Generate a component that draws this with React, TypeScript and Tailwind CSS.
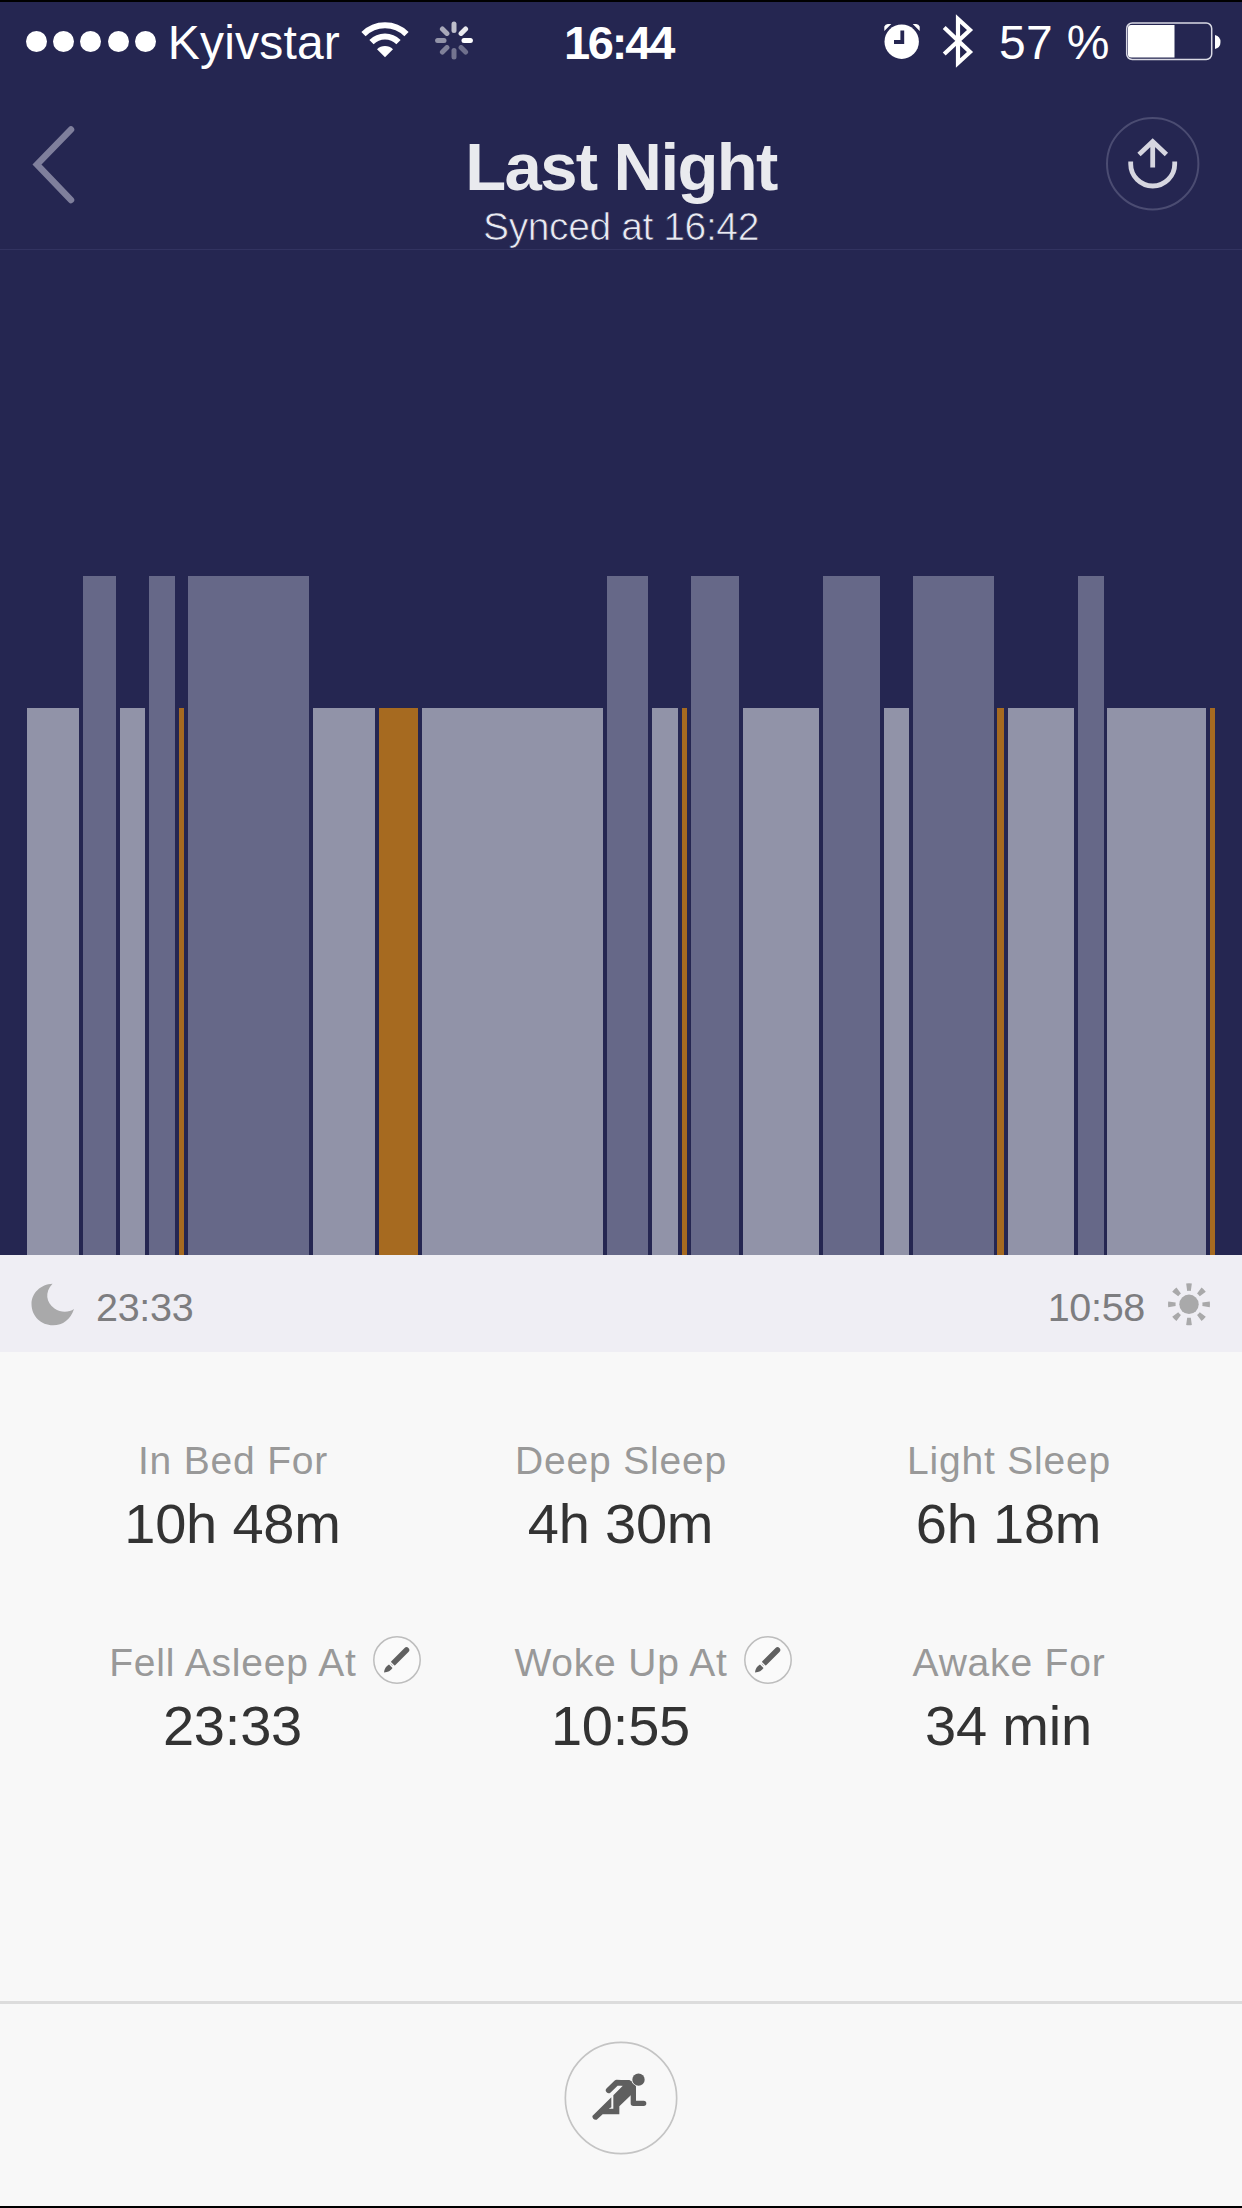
import type { ReactNode } from "react";

type Phase = "light" | "deep" | "awake";

const phaseStyle: Record<Phase, string> = {
  light: "h-[547px] bg-[#9193a8]",
  deep: "h-[679px] bg-[#666888]",
  awake: "h-[547px] bg-[#a66a20]",
};

const segments: [number, number, Phase][] = [
  [27, 79, "light"],
  [83, 116, "deep"],
  [120, 145, "light"],
  [149, 175, "deep"],
  [179, 184, "awake"],
  [188, 309, "deep"],
  [313, 375, "light"],
  [379, 418, "awake"],
  [422, 603, "light"],
  [607, 648, "deep"],
  [652, 678, "light"],
  [682, 687, "awake"],
  [691, 739, "deep"],
  [743, 819, "light"],
  [823, 880, "deep"],
  [884, 909, "light"],
  [913, 994, "deep"],
  [997, 1004, "awake"],
  [1008, 1074, "light"],
  [1078, 1104, "deep"],
  [1107, 1206, "light"],
  [1210, 1215, "awake"],
];

function StatusBar() {
  const rays = [1, 0.9, 0.7, 0.6, 0.5, 0.42, 0.36, 0.34];
  return (
    <div className="flex h-20 shrink-0 items-center text-[48px] leading-[80px] text-white">
      <div className="flex w-[480px] shrink-0 items-center">
        <div className="-mt-0.5 ml-[26px] flex gap-[6.2px]">
          {[0, 1, 2, 3, 4].map((i) => (
            <span key={i} className="size-[21px] rounded-full bg-white" />
          ))}
        </div>
        <span className="ml-[12px] w-[187px] pt-0.5 tracking-[0.2px]">Kyivstar</span>
        <svg className="h-20 w-[60px]" viewBox="355 2 60 80" fill="none" stroke="#fff">
          <path d="M363.5 34.2A30.5 30.5 0 0 1 406.5 34.2" strokeWidth="6" />
          <path d="M371.5 42.2A19 19 0 0 1 398.5 42.2" strokeWidth="6" />
          <path d="M377 49.2A11.5 11.5 0 0 1 393 49.2L385 57.3Z" fill="#fff" stroke="none" />
        </svg>
        <svg className="ml-[14px] h-20 w-[50px]" viewBox="429 2 50 80" stroke="#fff" strokeWidth="5" strokeLinecap="round">
          {rays.map((o, i) => {
            const a = (-i * Math.PI) / 4;
            const c = Math.cos(a);
            const s = Math.sin(a);
            return (
              <line key={i} x1={454 + 10 * c} y1={40.5 + 10 * s} x2={454 + 16.4 * c} y2={40.5 + 16.4 * s} opacity={o} />
            );
          })}
        </svg>
      </div>
      <span className="w-[277px] pt-0.5 text-center text-[47px] font-bold tracking-[-2.2px]">16:44</span>
      <div className="ml-auto flex w-[362px] shrink-0 items-center">
        <svg className="h-20 w-[44px]" viewBox="880 2 44 80">
          <circle cx="901.7" cy="41.7" r="17.2" fill="#fff" />
          <path d="M884.3 31v-4.5q1-2.5 3.5-2.5h3.5z M919.7 31v-4.5q-1-2.5-3.5-2.5h-3.5z" fill="#fff" />
          <path d="M902.3 30.5V42H894" stroke="#252651" strokeWidth="3.8" fill="none" />
        </svg>
        <svg className="ml-[16px] h-20 w-[38px]" viewBox="940 2 38 80" fill="none" stroke="#fff" strokeWidth="4.2">
          <path d="M944.2 27.5L970 52L958 63V19L970 30L944.2 54" />
        </svg>
        <span className="ml-[21px] w-[125px] whitespace-nowrap pt-0.5 tracking-[0.3px]">57 %</span>
        <svg className="h-20 w-[98px]" viewBox="1124 2 98 80">
          <rect x="1126.7" y="23" width="85" height="36.5" rx="5.5" fill="none" stroke="#d9d9e4" strokeWidth="1.5" />
          <path d="M1131 25h43.5v32.5h-43.5q-3 0-3-3v-26.5q0-3 3-3z" fill="#fff" />
          <path d="M1215 35q5.5 1.5 5.5 7t-5.5 7z" fill="#fff" />
        </svg>
      </div>
    </div>
  );
}

function Header() {
  return (
    <header className="flex h-[168px] shrink-0 justify-between border-b border-[#323360]">
      <svg className="h-[168px] w-[140px]" viewBox="0 82 140 168" fill="none" stroke="#7f7f9c" strokeWidth="6.5" strokeLinecap="round" strokeLinejoin="miter">
        <path d="M71 129.5L37 164.5L71 200" />
      </svg>
      <div className="flex flex-col items-center pt-[45px]">
        <h1 className="text-[67px] font-bold leading-[80px] tracking-[-1.6px] text-[#e9eaee]">Last Night</h1>
        <p className="text-[39px] leading-10 tracking-[-0.4px] text-[#e9eaf2] [-webkit-text-stroke:0.7px_#252651]">
          Synced at 16:42
        </p>
      </div>
      <svg className="h-[168px] w-[140px]" viewBox="1102 82 140 168" fill="none">
        <circle cx="1152.7" cy="163.7" r="45.7" stroke="#4b4c72" strokeWidth="2" />
        <g stroke="#d6d6e0" strokeWidth="4.8">
          <path d="M1130.7 161.5V164A22 22 0 0 0 1174.700 164V161.5" />
          <path d="M1152.7 142V167.5M1139 154.5L1152.700 141.5L1166.400 154.5" />
        </g>
      </svg>
    </header>
  );
}

function SleepChart() {
  return (
    <div className="flex h-[1005px] shrink-0 items-end">
      {segments.map(([start, end, phase], i) => (
        <div
          key={start}
          className={`shrink-0 ${phaseStyle[phase]}`}
          style={{ width: end - start, marginLeft: start - (i ? segments[i - 1][1] : 0) }}
        />
      ))}
    </div>
  );
}

function TimeRange() {
  return (
    <div className="flex h-[97px] shrink-0 items-center justify-between bg-[#efeef4] text-[39.5px] leading-[90px] tracking-[-0.3px] text-[#7d7d80]">
      <div className="flex items-center">
        <svg className="h-[97px] w-[80px]" viewBox="0 1255 80 97" fill="#a9a9aa">
          <path d="M52.5 1283.7C41 1284 31.5 1293 31.5 1304C31.5 1316 41 1325.3 53 1325.3C63 1325.3 70.5 1319.5 74 1309C69 1312.5 61 1313 54.5 1308.5C46 1302.5 44.5 1292 52.5 1283.7Z" />
        </svg>
        <span className="ml-[16px] pt-[7px]">23:33</span>
      </div>
      <div className="flex items-center">
        <span className="mr-[17px] pt-[7px]">10:58</span>
        <svg className="h-[97px] w-[80px]" viewBox="1162 1255 80 97">
          <circle cx="1189" cy="1304.3" r="9.7" fill="#a9a9aa" />
          <circle cx="1189" cy="1304.3" r="17.2" fill="none" stroke="#a9a9aa" strokeWidth="7.5" pathLength="80" strokeDasharray="3.6 6.4" strokeDashoffset="1.8" />
        </svg>
      </div>
    </div>
  );
}

function EditButton() {
  return (
    <svg className="absolute left-full top-[-4px] ml-[16px] size-12" viewBox="0 0 48 48">
      <circle cx="24" cy="24" r="23.2" fill="#fafafa" stroke="#bdbdbd" strokeWidth="1.5" />
      <path d="M20.5 27L33.5 14" stroke="#606060" strokeWidth="5.5" strokeLinecap="round" />
      <path d="M16 28.5L19.5 32Q17 36 11 36.5Q11.5 31 16 28.5Z" fill="#606060" />
      <path d="M16.5 25.5L22.5 31.5" stroke="#fafafa" strokeWidth="1.5" />
    </svg>
  );
}

function Stat({ label, value, children }: { label: string; value: string; children?: ReactNode }) {
  return (
    <div className="flex flex-col items-center gap-2">
      <div className="relative whitespace-nowrap text-[39px] leading-[46px] tracking-[0.8px] text-[#999]">
        {label}
        {children}
      </div>
      <div className="pr-px text-[56px] leading-[64px] tracking-[-0.2px] text-[#333]">{value}</div>
    </div>
  );
}

function Runner() {
  return (
    <svg className="size-[120px]" viewBox="183 174 360 360" fill="none">
      <circle cx="363" cy="354" r="167" stroke="#c4c4c4" strokeWidth="5" />
      <circle cx="415.5" cy="299" r="18.5" fill="#5f5f5f" />
      <path d="M326 331L350 308L388 310" stroke="#5f5f5f" strokeWidth="17" strokeLinecap="round" strokeLinejoin="round" />
      <path d="M350 300H388L408 320V345L398 352L394 344L358 379V403H308L290 419Q278 421 277 408L334 352V382L326 386H340V346L370 316Z" fill="#5f5f5f" />
      <path d="M400 322V370H431" stroke="#5f5f5f" strokeWidth="16" strokeLinecap="round" strokeLinejoin="round" />
    </svg>
  );
}

export default function App() {
  return (
    <div className="flex h-[2208px] w-[1242px] flex-col overflow-hidden border-y-2 border-black bg-[#f8f8f8] font-['Liberation_Sans',Arial,sans-serif]">
      <div className="flex shrink-0 flex-col bg-[#252651]">
        <StatusBar />
        <Header />
        <SleepChart />
      </div>
      <TimeRange />
      <div className="grid flex-1 grid-cols-[388px_388px_388px] content-start gap-y-[84px] pl-[39px] pt-[86px]">
        <Stat label="In Bed For" value="10h 48m" />
        <Stat label="Deep Sleep" value="4h 30m" />
        <Stat label="Light Sleep" value="6h 18m" />
        <Stat label="Fell Asleep At" value="23:33">
          <EditButton />
        </Stat>
        <Stat label="Woke Up At" value="10:55">
          <EditButton />
        </Stat>
        <Stat label="Awake For" value="34 min" />
      </div>
      <footer className="flex h-[205px] shrink-0 justify-center border-t-[3px] border-[#dcdcdc] pt-[34px]">
        <Runner />
      </footer>
    </div>
  );
}
